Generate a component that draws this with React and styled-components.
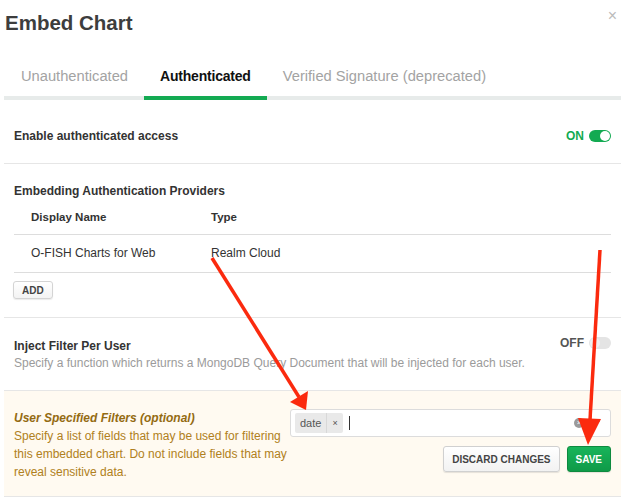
import React, { useState } from "react";
import styled, { createGlobalStyle } from "styled-components";

const GlobalStyle = createGlobalStyle`
  html, body {
    margin: 0;
    padding: 0;
    background: #fff;
  }
  body {
    font-family: "Liberation Sans", Arial, sans-serif;
    color: #333;
  }
`;

const Modal = styled.div`
  position: relative;
  width: 626px;
  height: 501px;
  padding: 0 5px 0 4px;
  box-sizing: border-box;
  overflow: hidden;
`;

const Header = styled.div`
  display: flex;
  justify-content: space-between;
  align-items: flex-start;
  height: 50px;
`;

const Title = styled.h1`
  margin: 10px 0 0 1px;
  font-size: 20.5px;
  line-height: 26px;
  font-weight: 700;
  color: #3d3d3d;
`;

const Close = styled.span`
  margin: 8px 4px 0 0;
  font-size: 16px;
  line-height: 16px;
  color: #bbb;
  cursor: pointer;
`;

const Tabs = styled.div`
  display: flex;
  border-bottom: 4px solid #e7ebea;
  padding-left: 1px;
`;

const Tab = styled.div`
  padding: 16px 16px 10px;
  margin-bottom: -4px;
  font-size: ${({ active }) => (active ? "14px" : "14.7px")};
  line-height: 20px;
  letter-spacing: ${({ active }) => (active ? "-0.2px" : "0")};
  font-weight: ${({ active }) => (active ? 700 : 400)};
  color: ${({ active }) => (active ? "#111" : "#a3a3a3")};
  border-bottom: 4px solid ${({ active }) => (active ? "#13aa52" : "transparent")};
  cursor: pointer;
`;

const Section = styled.div`
  padding: ${({ pad }) => pad || "20px 10px"};
  border-bottom: 1px solid #e6e6e6;
  background: ${({ warn }) => (warn ? "#fffaf1" : "transparent")};
`;

const Row = styled.div`
  display: flex;
  justify-content: space-between;
  align-items: ${({ top }) => (top ? "flex-start" : "center")};
`;

const Label = styled.div`
  font-size: 12px;
  line-height: 18px;
  font-weight: 700;
  color: #333;
`;

const Help = styled.div`
  font-size: 12px;
  line-height: 17px;
  color: #9b9b9b;
`;

const ToggleWrap = styled.div`
  display: flex;
  align-items: center;
  gap: 5px;
  margin-top: ${({ offset }) => offset || 0}px;
`;

const ToggleText = styled.span`
  font-size: 12px;
  font-weight: 700;
  color: ${({ on }) => (on ? "#13aa52" : "#555")};
`;

const Track = styled.span`
  position: relative;
  display: inline-block;
  width: 22px;
  height: 12px;
  border-radius: 6px;
  background: ${({ on }) => (on ? "#13aa52" : "#e4e4e4")};
`;

const Knob = styled.span`
  position: absolute;
  top: 1px;
  left: ${({ on }) => (on ? "11px" : "1px")};
  width: 10px;
  height: 10px;
  border-radius: 50%;
  background: ${({ on }) => (on ? "#fff" : "#f0f0f0")};
`;

const Table = styled.table`
  width: 100%;
  border-collapse: collapse;
  font-size: 12px;
`;

const Th = styled.th`
  text-align: left;
  font-size: 11.5px;
  font-weight: 700;
  padding: 8px 17px 8px;
  line-height: 18px;
  width: ${({ w }) => w || "auto"};
  border-bottom: 1px solid #ddd;
  color: #333;
`;

const Td = styled.td`
  padding: 9px 17px 10px;
  line-height: 18px;
  border-bottom: 1px solid #ddd;
  color: #333;
`;

const SmallButton = styled.button`
  display: block;
  margin: 8px 0 0 -1px;
  height: 18px;
  padding: 0 8px;
  border: 1px solid #d4d4d4;
  border-radius: 3px;
  background: linear-gradient(#fff, #f3f3f3);
  box-shadow: 0 1px 1px rgba(0, 0, 0, 0.08);
  font-family: inherit;
  font-size: 10px;
  font-weight: 700;
  color: #444;
  cursor: pointer;
`;

const FilterGrid = styled.div`
  display: grid;
  grid-template-columns: 1fr 321px;
  align-items: start;
`;

const WarnTitle = styled.div`
  font-size: 12px;
  line-height: 18px;
  font-weight: 700;
  font-style: italic;
  color: #946b11;
`;

const WarnText = styled.div`
  font-size: 12px;
  line-height: 18px;
  color: #b08020;
  width: 276px;
`;

const Select = styled.div`
  display: flex;
  align-items: center;
  height: 28px;
  box-sizing: border-box;
  padding: 0 10px 0 4px;
  background: #fff;
  border: 1px solid #dcdcdc;
  border-radius: 3px;
`;

const Chip = styled.span`
  display: flex;
  align-items: center;
  height: 20px;
  background: #e9e9e9;
  border-radius: 2px;
  font-size: 11px;
  color: #555;
`;

const ChipLabel = styled.span`
  padding: 0 5px;
`;

const ChipX = styled.span`
  padding: 0 5px;
  border-left: 1px solid #d8d8d8;
  line-height: 20px;
  font-size: 9px;
`;

const Caret = styled.span`
  width: 1px;
  height: 14px;
  background: #333;
  margin-left: 6px;
`;

const Spacer = styled.span`
  flex: 1;
`;

const ClearIcon = styled.span`
  display: inline-flex;
  align-items: center;
  justify-content: center;
  width: 10px;
  height: 10px;
  border-radius: 50%;
  background: #9a9a9a;
  color: #fff;
  font-size: 8px;
  line-height: 8px;
  margin-right: 6px;
`;

const Arrow = styled.span`
  width: 0;
  height: 0;
  border-left: 5px solid transparent;
  border-right: 5px solid transparent;
  border-top: 5px solid #555;
`;

const Actions = styled.div`
  display: flex;
  justify-content: flex-end;
  gap: 7px;
  margin-top: 9px;
`;

const Button = styled.button`
  height: 26px;
  padding: 0 8px;
  border-radius: 3px;
  border: 1px solid ${({ primary }) => (primary ? "#0e8a3f" : "#d0d0d0")};
  background: ${({ primary }) =>
    primary ? "linear-gradient(#18b45a, #0f9a48)" : "linear-gradient(#fff, #f2f2f2)"};
  box-shadow: 0 1px 1px rgba(0, 0, 0, 0.1);
  color: ${({ primary }) => (primary ? "#fff" : "#444")};
  font-family: inherit;
  font-size: 10px;
  font-weight: 700;
  cursor: pointer;
`;

const Annotations = styled.svg`
  position: absolute;
  left: 0;
  top: 0;
  pointer-events: none;
`;

function Toggle({ on, offset }) {
  return (
    <ToggleWrap offset={offset}>
      <ToggleText on={on}>{on ? "ON" : "OFF"}</ToggleText>
      <Track on={on}>
        <Knob on={on} />
      </Track>
    </ToggleWrap>
  );
}

export default function App() {
  const [tab, setTab] = useState("auth");
  const tabs = [
    ["unauth", "Unauthenticated"],
    ["auth", "Authenticated"],
    ["signed", "Verified Signature (deprecated)"],
  ];
  return (
    <Modal>
      <GlobalStyle />
      <Header>
        <Title>Embed Chart</Title>
        <Close>×</Close>
      </Header>
      <Tabs>
        {tabs.map(([key, label]) => (
          <Tab key={key} active={tab === key} onClick={() => setTab(key)}>
            {label}
          </Tab>
        ))}
      </Tabs>

      <Section pad="27px 10px 18px">
        <Row>
          <Label>Enable authenticated access</Label>
          <Toggle on />
        </Row>
      </Section>

      <Section pad="18px 10px 18px">
        <Label>Embedding Authentication Providers</Label>
        <Table>
          <thead>
            <tr>
              <Th w="146px">Display Name</Th>
              <Th>Type</Th>
            </tr>
          </thead>
          <tbody>
            <tr>
              <Td>O-FISH Charts for Web</Td>
              <Td>Realm Cloud</Td>
            </tr>
          </tbody>
        </Table>
        <SmallButton>ADD</SmallButton>
      </Section>

      <Section pad="19px 10px 18px">
        <Row top>
          <div>
            <Label>Inject Filter Per User</Label>
            <Help>
              Specify a function which returns a MongoDB Query Document that
              will be injected for each user.
            </Help>
          </div>
          <Toggle offset={-1} />
        </Row>
      </Section>

      <Section warn pad="18px 10px 15px">
        <FilterGrid>
          <div>
            <WarnTitle>User Specified Filters (optional)</WarnTitle>
            <WarnText>
              Specify a list of fields that may be used for filtering this
              embedded chart. Do not include fields that may reveal sensitive
              data.
            </WarnText>
          </div>
          <div>
            <Select>
              <Chip>
                <ChipLabel>date</ChipLabel>
                <ChipX>×</ChipX>
              </Chip>
              <Caret />
              <Spacer />
              <ClearIcon>×</ClearIcon>
              <Arrow />
            </Select>
            <Actions>
              <Button>DISCARD CHANGES</Button>
              <Button primary>SAVE</Button>
            </Actions>
          </div>
        </FilterGrid>
      </Section>

      <Annotations width="626" height="501" viewBox="0 0 626 501">
        <line x1="212" y1="258" x2="299" y2="397" stroke="#fb2a0e" strokeWidth="3.5" />
        <polygon points="306,410 290,402 308,391" fill="#fb2a0e" />
        <line x1="600" y1="250" x2="590" y2="420" stroke="#fb2a0e" strokeWidth="3.5" />
        <polygon points="588,445 578,418 601,419" fill="#fb2a0e" />
      </Annotations>
    </Modal>
  );
}
